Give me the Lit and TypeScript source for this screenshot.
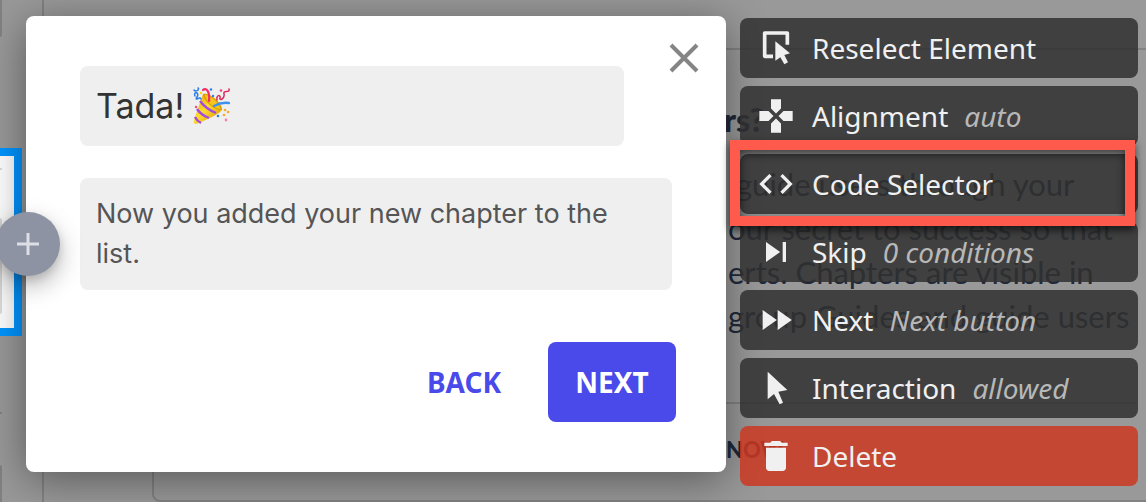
import { LitElement, html, css, svg, nothing } from "lit";
import { customElement, property } from "lit/decorators.js";
import { classMap } from "lit/directives/class-map.js";

const icons = {
  reselect: svg`
    <path d="M10.2 17H5.2V3H18.8V10" fill="none" stroke="currentColor" stroke-width="2.2" stroke-linejoin="round"/>
    <path d="M11.6 8V19.6L14.6 17.6L17 21.8L19.2 20.6L17 16.2L20.4 15.2Z"/>`,
  alignment: svg`<path d="M15 7.5V2H9v5.5l3 3 3-3zM7.5 9H2v6h5.5l3-3-3-3zM9 16.5V22h6v-5.5l-3-3-3 3zM16.5 9l-3 3 3 3H22V9h-5.5z"/>`,
  code: svg`<path d="M9.4 16.6L4.8 12l4.6-4.6L8 6l-6 6 6 6 1.4-1.4zm5.2 0l4.6-4.6-4.6-4.6L16 6l6 6-6 6-1.4-1.4z"/>`,
  skip: svg`<path d="M6 18l8.5-6L6 6v12zM16 6v12h2V6h-2z"/>`,
  next: svg`<path d="M4 18l8.5-6L4 6v12zm9-12v12l8.5-6L13 6z"/>`,
  pointer: svg`<path d="M7 2.2V18.8L10.8 15.6L14.2 21.8L16.2 20.8L13.4 14.2L18.8 13.2Z"/>`,
  trash: svg`<path d="M6 19c0 1.1.9 2 2 2h8c1.1 0 2-.9 2-2V7H6v12zM19 4h-3.5l-1-1h-5l-1 1H5v2h14V4z"/>`,
};

type IconName = keyof typeof icons;

interface Action {
  icon: IconName;
  label: string;
  hint?: string;
  marked?: boolean;
  danger?: boolean;
}

const actions: Action[] = [
  { icon: "reselect", label: "Reselect Element" },
  { icon: "alignment", label: "Alignment", hint: "auto" },
  { icon: "code", label: "Code Selector", marked: true },
  { icon: "skip", label: "Skip", hint: "0 conditions" },
  { icon: "next", label: "Next", hint: "Next button" },
  { icon: "pointer", label: "Interaction", hint: "allowed" },
  { icon: "trash", label: "Delete", danger: true },
];

@customElement("step-actions")
class StepActions extends LitElement {
  static styles = css`
    :host {
      display: block;
      font-family: "Noto Sans", sans-serif;
    }
    .list {
      display: flex;
      flex-direction: column;
      gap: 8px;
      margin: 0;
      padding: 0;
      list-style: none;
    }
    .entry {
      position: relative;
    }
    .marked {
      z-index: 1;
    }
    .marked::after {
      content: "";
      position: absolute;
      inset: -14px 3px -12px -10px;
      border: 10px solid #ff5a4b;
      filter: drop-shadow(0 4px 4px rgba(0, 0, 0, 0.65));
      pointer-events: none;
    }
    .action {
      display: flex;
      align-items: center;
      gap: 16px;
      width: 100%;
      height: 60px;
      padding: 0 16px;
      border: 0;
      border-radius: 8px;
      background: rgba(48, 48, 48, 0.85);
      color: #f0f0f0;
      font: inherit;
      font-size: 28px;
      line-height: 40px;
      white-space: nowrap;
      text-align: left;
      cursor: pointer;
    }
    .danger {
      background: rgba(203, 56, 33, 0.85);
    }
    .icon {
      flex: none;
      width: 40px;
      height: 40px;
      fill: currentColor;
    }
    .hint {
      color: #b8b8b8;
      font-style: italic;
    }
  `;

  @property({ attribute: false }) items: Action[] = [];

  render() {
    return html`<ul class="list">
      ${this.items.map(
        (a) => html`<li class=${classMap({ entry: true, marked: !!a.marked })}>
          <button type="button" class=${classMap({ action: true, danger: !!a.danger })}>
            <svg class="icon" viewBox="0 0 24 24" aria-hidden="true">${icons[a.icon]}</svg>
            <span>${a.label}</span>
            ${a.hint ? html`<span class="hint">${a.hint}</span>` : nothing}
          </button>
        </li>`
      )}
    </ul>`;
  }
}

@customElement("step-dialog")
class StepDialog extends LitElement {
  static styles = css`
    :host {
      display: block;
      position: relative;
    }
    .dialog {
      display: flex;
      flex-direction: column;
      padding: 50px 50px 50px 54px;
      border-radius: 8px;
      background: #fff;
      box-shadow: 0 8px 44px rgba(0, 0, 0, 0.42);
      font-family: Inter, sans-serif;
    }
    .field {
      display: flex;
      align-items: center;
      gap: 8px;
      box-sizing: border-box;
      margin: 0 4px 0 0;
      padding: 16px;
      border-radius: 8px;
      background: #efefef;
    }
    .title {
      height: 80px;
      margin-right: 52px;
    }
    .title-input,
    .body-input {
      padding: 0;
      border: 0;
      outline: 0;
      background: none;
      font-family: inherit;
    }
    .title-input {
      field-sizing: content;
      color: #333;
      font-size: 34px;
      line-height: 48px;
    }
    .emoji {
      width: 38px;
      height: 38px;
    }
    .body {
      margin-top: 32px;
    }
    .body-input {
      flex: 1;
      min-width: 0;
      height: 80px;
      overflow: hidden;
      resize: none;
      color: #555;
      font-size: 27px;
      line-height: 40px;
    }
    .buttons {
      display: flex;
      justify-content: flex-end;
      gap: 20px;
      margin-top: 52px;
    }
    .button {
      min-width: 128px;
      height: 80px;
      padding: 0 24px;
      border: 0;
      border-radius: 8px;
      background: none;
      color: #4a4aeb;
      font-family: "Noto Sans", sans-serif;
      font-size: 28px;
      font-weight: 700;
      cursor: pointer;
    }
    .primary {
      background: #4a4aeb;
      color: #fff;
    }
    .close {
      position: absolute;
      top: 26px;
      right: 26px;
      display: flex;
      padding: 0;
      border: 0;
      background: none;
      color: #858585;
      cursor: pointer;
    }
    .add {
      position: absolute;
      top: 196px;
      left: -30px;
      display: flex;
      align-items: center;
      justify-content: center;
      width: 64px;
      height: 64px;
      padding: 0;
      border: 0;
      border-radius: 50%;
      background: #8d93a2;
      color: #dcdfe5;
      box-shadow: 0 10px 24px rgba(0, 0, 0, 0.28), 0 4px 8px rgba(0, 0, 0, 0.12);
      cursor: pointer;
    }
    .close-icon {
      width: 32px;
      height: 32px;
    }
    .add-icon {
      width: 24px;
      height: 24px;
    }
    .stroke {
      fill: none;
      stroke: currentColor;
    }
  `;

  render() {
    return html`
      <section class="dialog" role="dialog" aria-label="Guide step">
        <div class="field title">
          <input class="title-input" aria-label="Title" .value=${"Tada!"} size="4" />
          <svg class="emoji" viewBox="0 0 38 38" role="img" aria-label="Party popper">
            <defs>
              <linearGradient id="cone" x1="0" y1="0" x2="1" y2="1">
                <stop offset="0" stop-color="#e59a00" />
                <stop offset="0.45" stop-color="#ffdd2e" />
                <stop offset="1" stop-color="#d88b00" />
              </linearGradient>
            </defs>
            <path d="M11 7C16 7 27 16 30 23C26 28 12 34 4 37Q1 37 2 33Z" fill="url(#cone)" />
            <path d="M11 7C18 5 31 17 30 23C23 24 11 14 11 7Z" fill="#dca008" />
            <path d="M13 8C18 7 28 17 28 22C22 21 14 15 13 8Z" fill="#f7c51b" />
            <path d="M8 14Q14 22 24 26M5 22Q9 28 17 31M3 30Q5 34 9 36" fill="none" stroke="#a24be0" stroke-width="2.4" />
            <path d="M2 3C4 6 8 2 6 1M3 9C1 4 8 5 5 10S8 9 9 12" fill="none" stroke="#2b7de9" stroke-width="1.5" stroke-linecap="round" />
            <path d="M11 3C14 0 18 4 17 14" fill="none" stroke="#f52c66" stroke-width="2.2" stroke-linecap="round" />
            <path d="M25 13C24 7 29 8 28 11S33 12 32 7S38 7 37 2" fill="none" stroke="#dc285e" stroke-width="1.5" stroke-linecap="round" />
            <path d="M22 19Q29 15 37 16" fill="none" stroke="#3d91f2" stroke-width="2.4" stroke-linecap="round" />
            <circle cx="9" cy="6" r="1.2" fill="#ffd500" />
            <circle cx="19" cy="2.5" r="1.2" fill="#2b7de9" />
            <circle cx="21" cy="9" r="1.2" fill="#2b7de9" />
            <circle cx="29" cy="3.5" r="1.3" fill="#ef3f79" />
            <circle cx="4" cy="20" r="1.2" fill="#ef4b80" />
            <circle cx="33" cy="23" r="1.3" fill="#f7a928" />
            <circle cx="36" cy="25" r="1.3" fill="#f7a928" />
            <circle cx="32" cy="28" r="1.3" fill="#f7a928" />
            <circle cx="26" cy="29" r="1.3" fill="#2b7de9" />
            <circle cx="34" cy="33" r="1.4" fill="#f283b2" />
          </svg>
        </div>
        <div class="field body">
          <textarea class="body-input" aria-label="Text" rows="2" .value=${"Now you added your new chapter to the list."}></textarea>
        </div>
        <div class="buttons">
          <button type="button" class="button">BACK</button>
          <button type="button" class="button primary">NEXT</button>
        </div>
      </section>
      <button type="button" class="close" aria-label="Close">
        <svg class="close-icon stroke" viewBox="0 0 32 32" stroke-width="4"><path d="M3 3L29 29M29 3L3 29" /></svg>
      </button>
      <button type="button" class="add" aria-label="Add step">
        <svg class="add-icon stroke" viewBox="0 0 24 24" stroke-width="3"><path d="M12 1V23M1 12H23" /></svg>
      </button>
    `;
  }
}

@customElement("page-backdrop")
class PageBackdrop extends LitElement {
  static styles = css`
    :host {
      display: flex;
      background: #999;
      color: #20283a;
      font-family: Lato, sans-serif;
    }
    .rail {
      display: flex;
      flex-direction: column;
      flex: 0 0 42px;
      border-right: 2px solid #828282;
    }
    .stub {
      width: 2px;
      background: #828282;
    }
    .stub-top {
      height: 37px;
      border-radius: 0 0 2px 0;
    }
    .stub-line {
      height: 2px;
      margin-top: 76px;
    }
    .stub-bottom {
      flex: 1;
      margin-top: 51px;
      border-radius: 0 2px 0 0;
    }
    .target {
      box-sizing: border-box;
      width: 22px;
      height: 188px;
      margin-top: 111px;
      padding-top: 12px;
      border: 8px solid #0095ff;
      border-left: 0;
      background: #fff;
    }
    .target-line {
      width: 2px;
      height: 2px;
      background: #ddd;
    }
    .target-bar {
      width: 2px;
      height: 96px;
      margin-top: 48px;
      border-radius: 0 2px 2px 0;
      background: #ddd;
    }
    .card {
      display: flex;
      flex: 1;
      justify-content: flex-end;
      margin: 48px -10px 0 108px;
      border: 2px solid #828282;
      border-radius: 8px;
    }
    .copy {
      flex: 0 0 412px;
      margin-right: 18px;
      white-space: nowrap;
    }
    .heading {
      margin: 0;
      padding-top: 48px;
      font-size: 32px;
      font-weight: 900;
      line-height: 44px;
    }
    .text {
      margin: 0;
      padding: 20px 0 64px 4px;
      border-bottom: 2px solid #828282;
      font-size: 31px;
      line-height: 44px;
    }
    .line {
      display: block;
    }
    .indent {
      padding-left: 8px;
    }
    .caption {
      margin: 0;
      padding: 32px 0 0 2px;
      font-size: 22px;
      font-weight: 900;
      line-height: 28px;
    }
  `;

  render() {
    return html`
      <div class="rail">
        <div class="stub stub-top"></div>
        <div class="target">
          <div class="target-line"></div>
          <div class="target-bar"></div>
        </div>
        <div class="stub stub-line"></div>
        <div class="stub stub-bottom"></div>
      </div>
      <div class="card">
        <div class="copy">
          <h2 class="heading">rs?</h2>
          <p class="text">
            <span class="line indent">guide users through your</span>
            <span class="line">our secret to success so that</span>
            <span class="line">erts. Chapters are visible in</span>
            <span class="line">group Guides and guide users</span>
          </p>
          <p class="caption">NOW</p>
        </div>
      </div>
    `;
  }
}

@customElement("app-root")
class AppRoot extends LitElement {
  static styles = css`
    :host {
      display: grid;
      min-height: 100vh;
      overflow: hidden;
    }
    .page,
    .overlay {
      grid-area: 1 / 1;
      min-width: 0;
    }
    .overlay {
      display: grid;
      grid-template-columns: minmax(0, 700fr) minmax(0, 398fr);
      align-items: start;
      gap: 14px;
      padding: 16px 8px 16px 26px;
    }
    .actions {
      margin-top: 2px;
    }
  `;

  render() {
    return html`
      <page-backdrop class="page"></page-backdrop>
      <main class="overlay">
        <step-dialog></step-dialog>
        <step-actions class="actions" .items=${actions}></step-actions>
      </main>
    `;
  }
}
